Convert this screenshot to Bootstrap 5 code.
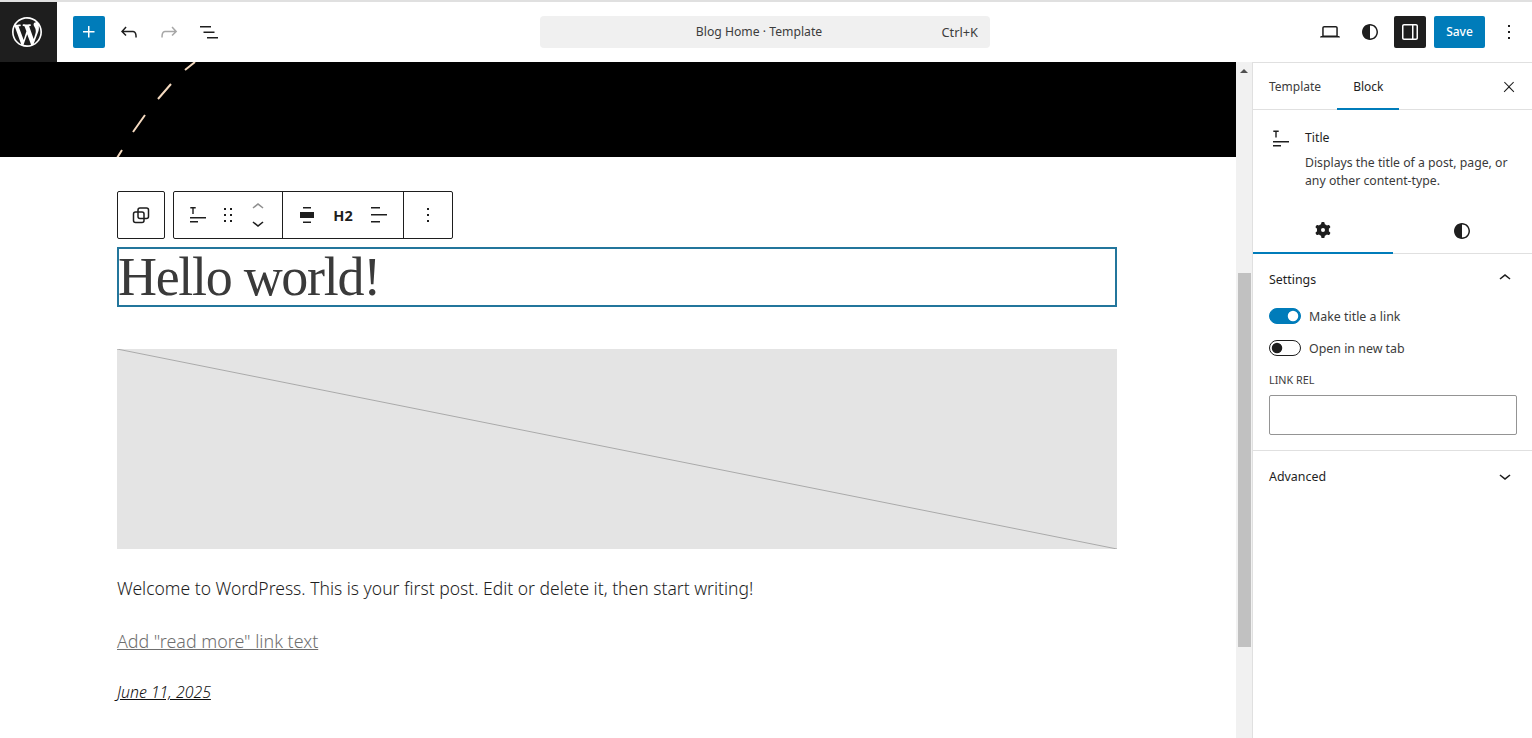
<!DOCTYPE html>
<html lang="en">
<head>
<meta charset="utf-8">
<title>Blog Home · Template</title>
<link href="https://cdn.jsdelivr.net/npm/bootstrap@5.3.0/dist/css/bootstrap.min.css" rel="stylesheet">
<style>
html,body{height:738px;overflow:hidden;background:#fff;}
body{font-family:"Noto Sans","Liberation Sans",sans-serif;font-size:13px;color:#1e1e1e;}
svg{display:block;fill:currentColor;flex:none;}
.wp-top{height:62px;border-top:2px solid #e0e0e0;border-bottom:0;}
.wp-logo{width:57px;height:60px;background:#1e1e1e;color:#fff;padding-right:3px;}
.wp-tools{padding-left:16px;gap:8px;width:483px;}
.wp-ib{width:32px;height:32px;border:0;padding:0;background:transparent;color:#1e1e1e;border-radius:2px;}
.wp-ib.is-blue{background:#007cba;color:#fff;}
.wp-ib.is-dark{background:#1e1e1e;color:#fff;}
.wp-ib.is-off{color:#a7a7a7;}
.wp-cmd{width:450px;height:32px;margin-top:14px;background:#f0f0f0;border-radius:4px;font-size:12.2px;color:#3c3c3c;position:relative;padding-right:12px;}
.wp-cmd-key{position:absolute;right:12px;top:8px;line-height:16px;font-size:12.8px;}
.wp-right{margin-left:auto;gap:8px;padding-right:7px;height:60px;}
.wp-save{width:51px;height:32px;background:#007cba;color:#fff;border:0;border-radius:2px;font-size:12px;font-weight:500;padding:0;}
.wp-body{height:676px;}
.wp-canvas{width:1236px;height:676px;overflow:hidden;}
.wp-band{height:95px;background:#000;}
.wp-band svg{width:1236px;height:95px;fill:none;}
.wp-post{padding:34px 119px 0 117px;}
.wp-btb{height:48px;gap:8px;margin-bottom:8px;}
.wp-tbox{height:48px;border:1px solid #1e1e1e;border-radius:2px;background:#fff;}
.wp-tg{height:46px;border-left:1px solid #1e1e1e;}
.wp-tg:first-child{border-left:0;}
.wp-tg svg{width:24px;height:24px;}
.wp-h2{font-size:14.5px;font-weight:700;width:24px;text-align:center;line-height:46px;}
.wp-mover{height:46px;width:24px;}
.wp-mover svg{height:16px;width:24px;}
.wp-title{height:60px;border:2px solid #23769c;font-family:"Liberation Serif",serif;font-weight:400;font-size:54px;line-height:56px;color:#3a3a3a;margin:0 0 42px;padding:0;letter-spacing:-1.3px;text-indent:-1px;}
.wp-ph{height:200px;background:#e4e4e4;margin-bottom:27px;}
.wp-ph svg{width:1000px;height:200px;fill:none;}
.wp-p{font-size:17.53px;line-height:24px;margin:0 0 29px;font-weight:300;color:#1e1e1e;}
.wp-more{color:#6f6f6f;text-decoration:underline;font-size:17.85px;}
.wp-date{font-size:15.85px;font-style:italic;font-weight:300;text-decoration:underline;line-height:20px;color:#111;}
.wp-scroll{width:16px;background:#f1f1f1;height:676px;}
.wp-thumb{width:13px;height:374px;background:#c1c1c1;margin:200px 0 0 2px;}
.wp-arrow{height:0;width:0;border:4px solid transparent;border-bottom:4px solid #505050;border-top:0;margin:7px 0 0 4px;}
.wp-side{width:280px;height:676px;border-left:1px solid #e0e0e0;border-top:1px solid #e0e0e0;color:#1e1e1e;}
.wp-stabs{height:47px;border-bottom:1px solid #e0e0e0;position:relative;padding-left:16px;}
.wp-stab{line-height:47px;height:47px;color:#3c3c3c;font-size:12px;}
.wp-stab-on{padding:0 16px;margin-left:16px;border-bottom:2px solid #007cba;height:47px;line-height:47px;color:#1e1e1e;font-size:12px;}
.wp-x{margin-left:auto;margin-right:11px;width:24px;height:24px;margin-top:12px;}
.wp-card{padding:17px 16px 0;height:96px;gap:12px;}
.wp-card svg{width:24px;height:24px;}
.wp-card-t{line-height:24px;height:24px;margin-top:-1px;font-size:12.3px;}
.wp-card-d{line-height:18px;font-size:12.25px;color:#3a3a3a;margin-top:4px;width:220px;}
.wp-itabs{height:48px;border-bottom:1px solid #e0e0e0;}
.wp-itab{width:140px;height:48px;padding-top:1px;}
.wp-itab.is-on{border-bottom:2px solid #007cba;}
.wp-panel{padding:0 16px;}
.wp-phead{height:54px;padding-bottom:2px;font-size:12.4px;}
.wp-sw{height:16px;gap:8px;margin-bottom:16px;font-size:12.4px;color:#3c3c3c;}
.wp-sw span{padding-top:2px;}
.wp-sw .form-check-input{width:32px;height:16px;margin:0;float:none;border:1px solid #1e1e1e;background-color:#fff;box-shadow:none;background-image:url("data:image/svg+xml,%3csvg xmlns='http://www.w3.org/2000/svg' viewBox='-4 -4 8 8'%3e%3ccircle r='3' fill='%231e1e1e'/%3e%3c/svg%3e");}
.wp-sw .form-check-input:checked{background-color:#007cba;border-color:#007cba;background-image:url("data:image/svg+xml,%3csvg xmlns='http://www.w3.org/2000/svg' viewBox='-4 -4 8 8'%3e%3ccircle r='3' fill='%23fff'/%3e%3c/svg%3e");}
.wp-lbl{font-size:10.8px;text-transform:uppercase;line-height:16px;margin-top:16px;margin-bottom:7px;color:#3c3c3c;}
.wp-input{height:40px;width:248px;border:1px solid #949494;border-radius:2px;padding:0 8px;font-size:13px;display:block;margin-bottom:15px;}
.wp-sep{border-top:1px solid #e0e0e0;height:51px;padding:0 16px;font-size:12.4px;}
.wp-sep span{padding-top:2px;}
</style>
</head>
<body>
<header class="wp-top d-flex">
  <a class="wp-logo d-flex align-items-center justify-content-center" href="#" aria-label="WordPress">
    <svg width="30" height="30" viewBox="0 0 20 20"><path d="M20 10c0-5.51-4.49-10-10-10C4.48 0 0 4.49 0 10c0 5.52 4.48 10 10 10 5.51 0 10-4.48 10-10zM7.78 15.37L4.37 6.22c.55-.02 1.17-.08 1.17-.08.5-.06.44-1.13-.06-1.11 0 0-1.45.11-2.37.11-.18 0-.37 0-.58-.01C4.12 2.69 6.87 1.11 10 1.11c2.33 0 4.45.87 6.05 2.34-.68-.11-1.65.39-1.65 1.58 0 .74.45 1.36.9 2.1.35.61.55 1.36.55 2.46 0 1.49-1.4 5-1.4 5l-3.03-8.37c.54-.02.82-.17.82-.17.5-.05.44-1.25-.06-1.22 0 0-1.44.12-2.38.12-.87 0-2.33-.12-2.33-.12-.5-.03-.56 1.2-.06 1.22l.92.08 1.26 3.41zM17.41 10c.24-.64.74-1.87.43-4.25.7 1.29 1.05 2.71 1.05 4.25 0 3.29-1.73 6.24-4.4 7.78.97-2.59 1.94-5.2 2.92-7.78zM6.1 18.09C3.12 16.65 1.11 13.53 1.11 10c0-1.3.23-2.48.72-3.59C3.25 10.3 4.67 14.2 6.1 18.09zm4.03-6.63l2.58 6.98c-.86.29-1.76.45-2.71.45-.79 0-1.57-.11-2.29-.33.81-2.38 1.62-4.74 2.42-7.1z"/></svg>
  </a>
  <div class="wp-tools d-flex align-items-center">
    <button class="wp-ib is-blue d-flex align-items-center justify-content-center" aria-label="Add"><svg width="24" height="24" viewBox="0 0 24 24"><path d="M11 12.5V17.5H12.5V12.5H17.5V11H12.5V6H11V11H6V12.5H11Z"/></svg></button>
    <button class="wp-ib d-flex align-items-center justify-content-center" aria-label="Undo"><svg width="24" height="24" viewBox="0 0 24 24"><path d="M18.3 11.7c-.6-.6-1.4-.9-2.3-.9H6.7l2.9-3.3-1.1-1-4.5 5L8.5 16l1-1-2.7-2.7H16c.5 0 .9.2 1.3.5 1 1 1 3.4 1 4.5v.3h1.5v-.2c0-1.5 0-4.3-1.5-5.7z"/></svg></button>
    <button class="wp-ib is-off d-flex align-items-center justify-content-center" aria-label="Redo"><svg width="24" height="24" viewBox="0 0 24 24"><path d="M15.6 6.5l-1.1 1 2.9 3.3H8c-.9 0-1.7.3-2.3.9-1.4 1.5-1.4 4.2-1.4 5.6v.2h1.5v-.3c0-1.1 0-3.5 1-4.5.3-.3.7-.5 1.3-.5h9.2L14.5 15l1.1 1.1 4.6-4.6-4.6-5z"/></svg></button>
    <button class="wp-ib d-flex align-items-center justify-content-center" aria-label="List view"><svg width="24" height="24" viewBox="0 0 24 24"><path d="M3 6h11v1.5H3V6Zm3.5 5.5h11V13h-11v-1.5ZM21 17H10v1.5h11V17Z"/></svg></button>
  </div>
  <div class="wp-cmd d-flex align-items-center justify-content-center"><span>Blog Home · Template</span><span class="wp-cmd-key">Ctrl+K</span></div>
  <div class="wp-right d-flex align-items-center">
    <button class="wp-ib d-flex align-items-center justify-content-center" aria-label="View"><svg width="24" height="24" viewBox="0 0 24 24"><path d="M20.5 16h-.7V8c0-1.1-.9-2-2-2H6.2c-1.1 0-2 .9-2 2v8h-.7c-.8 0-1.5.7-1.5 1.5h20c0-.8-.7-1.5-1.5-1.5zM5.7 8c0-.3.2-.5.5-.5h11.6c.3 0 .5.2.5.5v7.6H5.7V8z"/></svg></button>
    <button class="wp-ib d-flex align-items-center justify-content-center" aria-label="Styles"><svg width="24" height="24" viewBox="0 0 24 24"><path d="M12 4c-4.4 0-8 3.6-8 8s3.6 8 8 8 8-3.6 8-8-3.6-8-8-8zm0 14.5v-13c3.6 0 6.5 2.9 6.5 6.5s-2.9 6.5-6.5 6.5z"/></svg></button>
    <button class="wp-ib is-dark d-flex align-items-center justify-content-center" aria-label="Settings"><svg width="24" height="24" viewBox="0 0 24 24"><path d="M18 4H6c-1.1 0-2 .9-2 2v12c0 1.1.9 2 2 2h12c1.1 0 2-.9 2-2V6c0-1.1-.9-2-2-2zM5.5 18V6c0-.3.2-.5.5-.5h8v13H6c-.3 0-.5-.2-.5-.5zm13 0c0 .3-.2.5-.5.5h-2.5v-13H18c.3 0 .5.2.5.5v12z"/></svg></button>
    <button class="wp-save">Save</button>
    <button class="wp-ib d-flex align-items-center justify-content-center" aria-label="Options"><svg width="24" height="24" viewBox="0 0 24 24"><path d="M13 19h-2v-2h2v2zm0-6h-2v-2h2v2zm0-6h-2V5h2v2z"/></svg></button>
  </div>
</header>
<div class="wp-body d-flex">
  <main class="wp-canvas">
    <div class="wp-band">
      <svg viewBox="0 0 1236 95" aria-hidden="true"><path d="M195 0L185 8M171 22L158 37M145 53L133 70M122 88L117 96" stroke="#f4d9bf" stroke-width="2"/></svg>
    </div>
    <div class="wp-post">
      <div class="wp-btb d-flex">
        <div class="wp-tbox d-flex align-items-center justify-content-center" style="width:48px">
          <svg width="24" height="24" viewBox="0 0 24 24" style="fill:none;stroke:#1e1e1e;stroke-width:1.5"><rect x="9" y="5" width="10.5" height="10.5" rx="2"/><rect x="4.5" y="9" width="10.5" height="10.5" rx="2"/></svg>
        </div>
        <div class="wp-tbox d-flex" style="width:280px">
          <div class="wp-tg d-flex align-items-center" style="width:108px;padding-left:12px;gap:6px">
            <svg viewBox="0 0 24 24"><path d="M4.3 4h5.4v1.4H7.7V11H6.3V5.4H4.3zM4 14h16v1.5H4zM4 18h8v1.5H4z"/></svg>
            <svg viewBox="0 0 24 24"><path d="M8 7h2V5H8v2zm0 6h2v-2H8v2zm0 6h2v-2H8v2zm6-14v2h2V5h-2zm0 8h2v-2h-2v2zm0 6h2v-2h-2v2z"/></svg>
            <div class="wp-mover d-flex flex-column justify-content-center">
              <svg viewBox="0 4 24 16" style="color:#8f8f8f"><path d="M6.5 12.4L12 8l5.5 4.4-.9 1.2L12 10l-4.5 3.6-1-1.2z"/></svg>
              <svg viewBox="0 4 24 16"><path d="M17.5 11.6L12 16l-5.5-4.4.9-1.2L12 14l4.5-3.6 1 1.2z"/></svg>
            </div>
          </div>
          <div class="wp-tg d-flex align-items-center" style="width:121px;padding-left:12px;gap:12px">
            <svg viewBox="0 0 24 24"><path d="M8 4h8v1.5H8zM5 9h14v6H5zM8 18.5h8V20H8z"/></svg>
            <span class="wp-h2">H2</span>
            <svg viewBox="0 0 24 24"><path d="M13 5.5H4V4h9v1.5Zm7 7H4V11h16v1.5Zm-7 7H4V18h9v1.5Z"/></svg>
          </div>
          <div class="wp-tg d-flex align-items-center justify-content-center flex-fill">
            <svg viewBox="0 0 24 24"><path d="M13 19h-2v-2h2v2zm0-6h-2v-2h2v2zm0-6h-2V5h2v2z"/></svg>
          </div>
        </div>
      </div>
      <h2 class="wp-title">Hello world!</h2>
      <div class="wp-ph"><svg viewBox="0 0 1000 200" aria-hidden="true"><path d="M0 0L1000 200" stroke="#aaa" stroke-width="1"/></svg></div>
      <p class="wp-p">Welcome to WordPress. This is your first post. Edit or delete it, then start writing!</p>
      <p class="wp-p wp-more">Add "read more" link text</p>
      <div class="wp-date">June 11, 2025</div>
    </div>
  </main>
  <div class="wp-scroll"><div class="wp-arrow"></div><div class="wp-thumb"></div></div>
  <aside class="wp-side">
    <div class="wp-stabs d-flex">
      <span class="wp-stab">Template</span>
      <span class="wp-stab-on">Block</span>
      <div class="wp-x"><svg width="24" height="24" viewBox="0 0 24 24"><path d="M13 11.8l6.1-6.3-1-1-6.1 6.2-6.1-6.2-1 1 6.1 6.3-6.5 6.7 1 1 6.5-6.6 6.5 6.6 1-1z" transform="translate(3.6 3.6) scale(.7)"/></svg></div>
    </div>
    <div class="wp-card d-flex">
      <svg viewBox="0 0 24 24"><path d="M4.3 3.5h5.4v1.4H7.7v5.6H6.3V4.9H4.3zM4 14h16v1.4H4zM4 18h8v1.4H4z"/></svg>
      <div>
        <div class="wp-card-t">Title</div>
        <div class="wp-card-d">Displays the title of a post, page, or any other content-type.</div>
      </div>
    </div>
    <div class="wp-itabs d-flex">
      <div class="wp-itab is-on d-flex align-items-center justify-content-center"><svg width="24" height="24" viewBox="0 0 24 24"><path fill-rule="evenodd" d="M10.289 4.836A1 1 0 0111.275 4h1.306a1 1 0 01.987.836l.244 1.466c.787.26 1.503.679 2.108 1.218l1.393-.522a1 1 0 011.216.437l.653 1.13a1 1 0 01-.23 1.273l-1.148.944a6.025 6.025 0 010 2.435l1.149.946a1 1 0 01.23 1.272l-.653 1.13a1 1 0 01-1.216.437l-1.394-.522c-.605.54-1.32.958-2.108 1.218l-.244 1.466a1 1 0 01-.987.836h-1.306a1 1 0 01-.986-.836l-.244-1.466a5.995 5.995 0 01-2.108-1.218l-1.394.522a1 1 0 01-1.217-.436l-.653-1.131a1 1 0 01.23-1.272l1.149-.946a6.026 6.026 0 010-2.435l-1.148-.944a1 1 0 01-.23-1.272l.653-1.131a1 1 0 011.217-.437l1.393.522a5.994 5.994 0 012.108-1.218l.244-1.466zM14 12a2 2 0 11-4 0 2 2 0 014 0z"/></svg></div>
      <div class="wp-itab d-flex align-items-center justify-content-center"><svg width="24" height="24" viewBox="0 0 24 24"><path d="M12 4c-4.4 0-8 3.6-8 8s3.6 8 8 8 8-3.6 8-8-3.6-8-8-8zm0 14.5v-13c3.6 0 6.5 2.9 6.5 6.5s-2.9 6.5-6.5 6.5z"/></svg></div>
    </div>
    <div class="wp-phead d-flex align-items-center justify-content-between px-3">
      <span>Settings</span>
      <svg width="24" height="24" viewBox="0 0 24 24" style="margin-right:-1px;margin-top:-4px"><path d="M6.5 12.4L12 8l5.5 4.4-.9 1.2L12 10l-4.5 3.6-1-1.2z"/></svg>
    </div>
    <div class="wp-panel">
      <div class="wp-sw form-switch d-flex align-items-center ps-0"><input class="form-check-input" type="checkbox" role="switch" checked aria-label="Make title a link"><span>Make title a link</span></div>
      <div class="wp-sw form-switch d-flex align-items-center ps-0"><input class="form-check-input" type="checkbox" role="switch" aria-label="Open in new tab"><span>Open in new tab</span></div>
      <div class="wp-lbl">Link rel</div>
      <input class="wp-input" type="text" aria-label="Link rel">
    </div>
    <div class="wp-sep d-flex align-items-center justify-content-between">
      <span>Advanced</span>
      <svg width="24" height="24" viewBox="0 0 24 24" style="margin-right:-1px"><path d="M17.5 11.6L12 16l-5.5-4.4.9-1.2L12 14l4.5-3.6 1 1.2z"/></svg>
    </div>
  </aside>
</div>
<script src="https://cdn.jsdelivr.net/npm/bootstrap@5.3.0/dist/js/bootstrap.bundle.min.js"></script>
</body>
</html>
